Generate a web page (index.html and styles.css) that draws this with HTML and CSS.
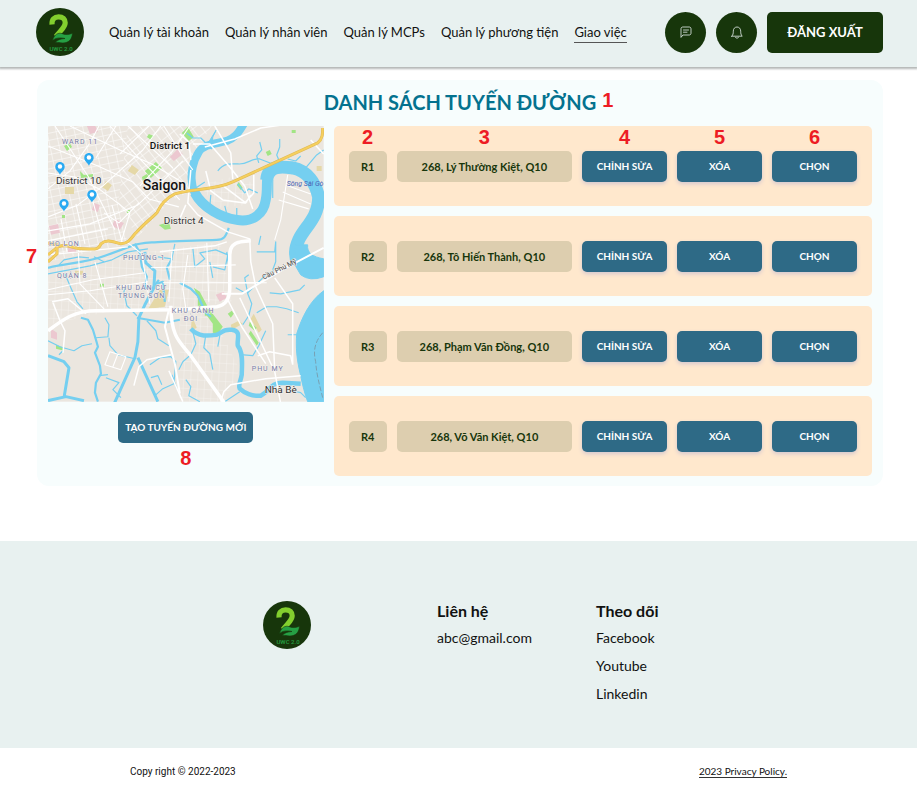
FILE: index.html
```html
<!DOCTYPE html>
<html lang="vi">
<head>
<meta charset="utf-8">
<meta name="viewport" content="width=device-width, initial-scale=1">
<title>UWC 2.0</title>
<link rel="stylesheet" href="styles.css">
</head>
<body>
<svg class="defs" aria-hidden="true">
  <symbol id="logo" viewBox="0 0 48 48">
    <circle cx="24" cy="24" r="24" fill="#17360b"/>
    <path d="M16 16.500C15.600 11.500 18.500 8.800 22.600 8.800c4.200 0 6.600 2.400 6.600 5.900 0 4.800-4.400 7.300-9.200 13.800" fill="none" stroke="#83cf2e" stroke-width="5.200"/>
    <path d="M16.500 32.500c1.500-5.500 5.400-8.500 9.800-6.800 3.500 1.400 6.500 1 10.200-.4-.6 7.600-5.500 10.600-12 9.400-2.100-.4-4-.4-5.500 0 2.600-3 5.300-3.700 10-4.200-5-1.100-9.300-.8-12.500 2z" fill="#26a044" stroke="#17360b" stroke-width=".6"/>
    <text x="25" y="43" text-anchor="middle" class="logo-text">UWC 2.0</text>
  </symbol>
  <symbol id="pin" viewBox="0 0 10 13">
    <path d="M5 0a4.700 4.700 0 0 1 4.700 4.700C9.700 8 6.500 9.500 5 12.700 3.500 9.500.3 8 .3 4.700A4.700 4.700 0 0 1 5 0z" fill="#2aaaf2"/>
    <circle cx="5" cy="4.600" r="2.200" fill="#fff"/>
  </symbol>
</svg>

<header class="header">
  <a class="brand" href="#"><svg class="logo" role="img" aria-label="UWC 2.0"><use href="#logo"/></svg></a>
  <nav class="nav">
    <a href="#">Quản lý tài khoản</a>
    <a href="#">Quản lý nhân viên</a>
    <a href="#">Quản lý MCPs</a>
    <a href="#">Quản lý phương tiện</a>
    <a href="#" class="active" aria-current="page">Giao việc</a>
  </nav>
  <div class="actions">
    <button class="round" type="button" aria-label="Tin nhắn">
      <svg width="12" height="12" viewBox="0 0 12 12"><path d="M1 11V2.800C1 1.700 1.700 1 2.800 1h6.400c1.100 0 1.800.7 1.800 1.800v4.400C11 8.300 10.300 9 9.200 9H3.300zM3.500 4h5M3.500 6.200h3.500"/></svg>
    </button>
    <button class="round" type="button" aria-label="Thông báo">
      <svg width="12" height="13" viewBox="0 0 12 13"><path d="M.8 10.200h10.400C9.900 8.700 9.700 7.500 9.700 5.200 9.700 2.700 8.200 1 6 1S2.300 2.700 2.300 5.200c0 2.300-.2 3.500-1.500 5zM4.500 11.500c.8.900 2.200.9 3 0"/></svg>
    </button>
    <button class="logout" type="button">ĐĂNG XUẤT</button>
  </div>
</header>

<main class="panel">
  <h1 class="title">DANH SÁCH TUYẾN ĐƯỜNG<span class="mark mark-title">1</span></h1>
  <div class="columns">
    <section class="map-col">
      <div class="map-box">
      <span class="mark mark-map">7</span>
      <svg class="map" viewBox="48 126 276 276" role="img" aria-label="Saigon">
        <defs>
          <pattern id="g1" width="8" height="10" patternUnits="userSpaceOnUse" patternTransform="rotate(-38)"><path d="M0 0H8M0 0V10" stroke="#fff" stroke-width="1.200"/></pattern>
          <pattern id="g2" width="9" height="7" patternUnits="userSpaceOnUse" patternTransform="rotate(-12)"><path d="M0 0H9M0 0V7" stroke="#fff" stroke-width="1"/></pattern>
          <pattern id="g3" width="7" height="9" patternUnits="userSpaceOnUse" patternTransform="rotate(3)"><path d="M0 0H7M0 0V9" stroke="#f8f6f2" stroke-width=".8"/></pattern>
        </defs>
        <rect x="48" y="126" width="276" height="276" fill="#ebe6df"/>
        <path d="M128 126h84l-17 25-3 40-22 10-32 36-20-30z" fill="url(#g1)"/>
        <path d="M48 126h80l-10 80 10 38-80 18z" fill="url(#g2)"/>
        <path d="M48 266l172-24 12 60-50 8-60-1-74 16zM200 185l40-10 15 10-8 20-30 3zM180 310l30 0 30 60-16 32h-45z" fill="url(#g3)"/>
        <g fill="#e5d8a7"><path d="M65 187h9v7h-9zM132 165l7 5-4 5-7-4zM106 181l6 4-4 6-6-4zM149 308l11-18h9l-4 17-22 3zM254 314l8 16-3 3-8-14zM231 325l8-4 4 3-11 6zM75 271l8 0v4h-8zM317 166h5v5h-5zM192 316l5 12-6 3z"/></g>
        <g fill="#ecc8d0"><path d="M170 157l8-8 5 5-9 7zM87 126l8-1 3 7-8 2zM49 226l9-2 2 9-9 2zM115 219l9 4-4 7-8-4zM216 295l8-3 3 6-7 4zM51 329l6 4v7l-6-2zM94 203l6 2-2 7-6-2zM68 247l8 2v4h-8z"/></g>
        <g fill="#a2e585"><path d="M145 171l11-9 6 6-11 10zM149 134l5 2-3 4-4-3zM142 177l5-3 2 3-6 4zM64 146l6-3 2 4-5 4zM80 171l4 4 9-1v3l-12 1zM182 133l6-6 6 10-5 4zM266 152l4-2 2 4-4 2zM159 225l10-3 2 7-6 1zM194 288l6 4 9 17 14 18-5 7-5-1 0-9-11-15zM198 299h5v8h-5zM251 331l8 12-2 3-8-12zM250 322l7 6-2 3-6-5zM56 345l8 3v3l-8-2zM239 182l4 6-2 2-4-5zM100 284h4v3h-4zM292 130h4v3h-4zM228 314l4-3 2 3-3 4zM205 311h5v5h-5zM62 215h3v3h-3zM127 210h3v3h-3z"/></g>
        <g class="water">
          <path class="w8" d="M244 124C238 134 235 138 227 141 215 144 204 144 199 152 193 161 191 174 192 181 193 196 203 206 214 212"/>
          <path class="w10" d="M195 193C203 208 222 218 237 220 254 223 264 213 266 200 269 186 264 175 273 168"/>
          <path class="w12" d="M267 180C268 164 285 167 293 168 308 171 316 184 319 197 319 218 305 227 299 240 295 249 295 255 298 264"/>
          <path d="M296 245h12c-1 8 5 12 16 14v18q-14 5-23-2l-7-12zM324 291c-14 10-22 27-27 43-1 14 0 26 4 42 2 10 4 18 7 26h16zM273 163l5-3v6zM217 129l-4 8-1 12-6-2z" fill="#75cff0"/>
          <path class="w3" d="M48 268C68 263 87 263 105 256L132 246C142 242 161 242 217 240 224 240 226 237 229 228"/>
          <path class="w2" d="M48 274l42-8 22-6 16-8 20-3M187 133l6 5 8 0 6 6M218 171c7-9 14-7 20-7 10 1 13-6 22-5l13 5M260 142l2 8-5 6 2 7M280 139v8l-3 8 3 7M299 165l-2 8 9-5 11-13 7-5"/>
          <path class="w2" d="M301 156l-5 5-8-2M238 184l7 9 4-4 9 4M211 195l-1 12M225 206l2 8M237 208v10M196 188l9-6M273 180v18"/>
          <path class="w3" d="M135 244l5 9 2 14 5 10-2 11 8 0 6-8"/>
          <path class="w4" d="M145 252l1 11 9 8-1 17-9 17-6 13-1 24-3 16-23 51M138 358l20 44"/>
          <path class="w2" d="M65 274l5 12 7 16 6 7"/>
          <path class="w3" d="M81 318l7 2 5 10 3 10 2 7-3 6 5 13 1 8-5 9-1 10 3 9"/>
          <path class="w2" d="M96 338l12-1 1-12-4-7M109 338l1 8 8 9 17 4M92 344l-10 2-8 5-14-4-12-6M63 351l-4 4M99 376l9-1M147 321l9 10 2 8 11 7"/>
          <path class="w4" d="M48 356l16 6 5 6-5 30M48 401l18-4 18 4"/>
          <path class="w2" d="M126 286l-2 6 3 14 10 10"/>
          <path class="w3" d="M137 318l28 5 15-3M180 283l11 6 7 7 8 17 5 4M157 284l6-2 2 20M172 259l-5 9 3 12"/>
          <path class="w6" d="M191 329c8 9 19 7 26 6 6-2 5-6 15-5 10 1 5 9 6 16 6 7 4 21 4 29-1 7-4 10-2 14 4 4 13 8 21 7 10-5 9-13 22-13l18 1"/>
          <path class="w2" d="M240 392l-15 10M241 355l12 1 6-10 7-15M243 325l6-9 3-12-4-10-3-16 4-3M236 288l9 5M248 293l18-18 8-4M270 293l11 1 19-4 5-5M257 313l10-6 10 0 10 2 12 4M288 335h10M291 391l10 2 5 5"/>
          <path class="w2" d="M193 332l3 12-5 11-8 7-4 8M206 335l-2 13 6 6 3 16M220 336l-2 11M186 380l5 7-2 9 11 6M172 375l5 14M150 365l10-7 11-1 5 5-2 22-11 5-8 7M151 378l7-2 4 9M106 378l13 5-6 7 8 8"/>
          <path class="w2" d="M193 248l2 19 10-8-5-6 16-3 12 5-3 15-12-3M213 278l-3-16M257 252h18l1-10 0 20-3 8M261 236l-2 9M227 252l2 14M59 265l5-5 15-3 10 1M94 257l10 5M158 257l14 2 3-15"/>
        </g>
        <g class="roads">
          <path class="r1" d="M48 146l50 20 35 16 16 17 30 8M55 126l33 50 27 54M48 189l22-18 20-28 9-17M48 217l30-12 25-19 40-36 18-24M70 126l50 24 32 14 30 18M48 173l27 4 24 12 20 15 11 9-9 30M48 231l42-7 48-19 20-19 25-25M96 158l20-32M76 204l9 40M110 126l26 29 44 45M128 126l45 42M120 154l29-28M140 186l32-34 18-26M48 241l60-12M61 219l6 33M92 198l12 44M112 205l11 40M164 126l18 29 11 15M104 213l15 10 20-20"/>
          <path class="r1" d="M128 243l14 11 8 50M48 290l45-10 52-7M48 255l80-8M95 262l13 45M78 244l2 40 25 26M172 252l-3 50M188 255l-5 34 3 20M207 243l2 59M48 295l42-4 58-9M163 283h104M151 268l85-3"/>
          <path class="r2" d="M191 170l-3 33 10 12 30 17 22 7 1 23 5 25 17 37 2 48 6 32M186 205l-7 16M191 160l-2-18-9-8M193 144h17l20 23 15 19 8 23M206 171l5 20 12 9 22 3 9-10v-18M205 147l30-8 26-11 63-9M215 126l16 27 2 26M222 185l24 18 5-8M230 283h30M160 252l55-6 12-4M311 140l13 14"/>
          <path class="r2" d="M134 386l5-19 8-7 24-5M183 402l-14-31M221 402l3-10 7-7 35-6 35-3M258 356l12-4 21 4 2 9M293 365v-61l-18-26M240 298l20 42 15 32M227 298l15 29 24 37M52 302l16-3 18 15M53 303l7 18 5 10-2 22"/>
          <path class="r4" d="M48 331c16-12 27-20 48-20l79-1 42-3c12-2 13-14 13-19v-33c0-8 4-12 11-13l10-1M171 306c0 32 10 37 20 50l30 42 4 6"/>
          <path class="r3" d="M222 294h20l20-12 24-14 38-20M169 310l-4 17 10 37 5 30"/>
          <path class="r1" d="M110 352l16 5-5 13-16-5zM118 354l-5 13M286 185l25 9M283 192l28 12M279 200l30 9M288 175l-7 45-6 20"/>
        </g>
        <path d="M48 262l9-8 0-9-9-2M48 255l10-8c10-4 14 2 25 2 11 0 15 2 18-5 6-5 12-2 20 0 10-1 11-8 16-12 8-9 14-13 20-19 4-8 8-14 18-19 18-6 39-3 58-12l37-17 48-22c5-4 5-9 5-15" fill="none" stroke="#dfb956" stroke-width="3"/>
        <path d="M48 262l9-8 0-9-9-2M48 255l10-8c10-4 14 2 25 2 11 0 15 2 18-5 6-5 12-2 20 0 10-1 11-8 16-12 8-9 14-13 20-19 4-8 8-14 18-19 18-6 39-3 58-12l37-17 48-22c5-4 5-9 5-15" fill="none" stroke="#f5cf5e" stroke-width="2"/>
        <path d="M323 333c-7 8-10 17-7 29 1 15 5 27 7 36" fill="none" stroke="#77a1b4" stroke-dasharray="5 2"/>
        <g class="area">
          <text x="62" y="144">WARD 11</text><text x="49" y="246">HO LON</text><text x="123" y="260">PHƯỜNG 1</text><text x="57" y="278">QUẬN 8</text>
          <text x="116" y="290">KHU DÂN CƯ</text><text x="118" y="298">TRUNG SƠN</text><text x="172" y="313">KHU CẢNH</text><text x="184" y="321">ĐỒI</text><text x="252" y="371">PHU MY</text>
        </g>
        <g class="place"><text x="56" y="184">District 10</text><text x="164" y="224">District 4</text><text x="265" y="393">Nhà Bè</text></g>
        <text class="place dark" x="150" y="149">District 1</text>
        <text class="city" x="143" y="190">Saigon</text>
        <text class="river" x="287" y="186">Sông Sài Gò</text>
        <text class="bridge" transform="translate(264 280) rotate(-27)">Cầu Phú Mỹ</text>
        <use href="#pin" x="55" y="162" width="10" height="13"/><use href="#pin" x="84" y="153" width="10" height="13"/>
        <use href="#pin" x="87" y="190" width="10" height="13"/><use href="#pin" x="59" y="199" width="10" height="13"/>
      </svg>
      </div>
      <button class="btn create" type="button">TẠO TUYẾN ĐƯỜNG MỚI</button>
      <span class="mark">8</span>
    </section>
    <ul class="routes">
      <li class="route">
        <span class="cell code">R1<span class="mark over">2</span></span>
        <span class="cell address">268, Lý Thường Kiệt, Q10<span class="mark over">3</span></span>
        <div class="slot"><button class="btn" type="button">CHỈNH SỬA</button><span class="mark over">4</span></div>
        <div class="slot"><button class="btn" type="button">XÓA</button><span class="mark over">5</span></div>
        <div class="slot"><button class="btn" type="button">CHỌN</button><span class="mark over">6</span></div>
      </li>
      <li class="route">
        <span class="cell code">R2</span>
        <span class="cell address">268, Tô Hiến Thành, Q10</span>
        <div class="slot"><button class="btn" type="button">CHỈNH SỬA</button></div>
        <div class="slot"><button class="btn" type="button">XÓA</button></div>
        <div class="slot"><button class="btn" type="button">CHỌN</button></div>
      </li>
      <li class="route">
        <span class="cell code">R3</span>
        <span class="cell address">268, Phạm Văn Đồng, Q10</span>
        <div class="slot"><button class="btn" type="button">CHỈNH SỬA</button></div>
        <div class="slot"><button class="btn" type="button">XÓA</button></div>
        <div class="slot"><button class="btn" type="button">CHỌN</button></div>
      </li>
      <li class="route">
        <span class="cell code">R4</span>
        <span class="cell address">268, Võ Văn Kiệt, Q10</span>
        <div class="slot"><button class="btn" type="button">CHỈNH SỬA</button></div>
        <div class="slot"><button class="btn" type="button">XÓA</button></div>
        <div class="slot"><button class="btn" type="button">CHỌN</button></div>
      </li>
    </ul>
  </div>
</main>

<footer>
  <div class="footer">
    <svg class="logo footer-logo" role="img" aria-label="UWC 2.0"><use href="#logo"/></svg>
    <section>
      <h2>Liên hệ</h2>
      <a href="#">abc@gmail.com</a>
    </section>
    <section>
      <h2>Theo dõi</h2>
      <a href="#">Facebook</a>
      <a href="#">Youtube</a>
      <a href="#">Linkedin</a>
    </section>
  </div>
  <div class="legal">
    <span>Copy right © 2022-2023</span>
    <a href="#">2023 Privacy Policy.</a>
  </div>
</footer>
</body>
</html>
```
FILE: styles.css
```css
* { box-sizing: border-box; }

body {
  margin: 0;
  background: #fff;
  color: #111;
  font-family: Lato, "Open Sans", sans-serif;
  font-size: 13px;
}

a { color: inherit; text-decoration: none; }
button { font: inherit; border: 0; padding: 0; cursor: pointer; }
h1, h2, ul { margin: 0; padding: 0; }
.defs { position: absolute; width: 0; height: 0; }

.header {
  display: flex;
  align-items: center;
  height: 67px;
  padding: 0 34px 3px 36px;
  background: #e8f1f0;
  box-shadow: 0 1px 2px 1px #b4b8b7;
}

.brand { display: flex; }
.logo { display: block; width: 48px; height: 48px; }
.logo-text { font: 500 6px Roboto, sans-serif; fill: #26a044; }

.nav { display: flex; gap: 16px; margin-left: 25px; white-space: nowrap; }
.nav a { line-height: 20px; border-bottom: 1px solid transparent; }
.nav .active { border-color: #555; }

.actions { display: flex; gap: 10px; margin-left: auto; }
.round {
  display: grid;
  place-items: center;
  width: 41px;
  height: 41px;
  border-radius: 50%;
  background: #17360b;
}
.round svg { fill: none; stroke: #e8f1f0; stroke-linejoin: round; stroke-linecap: round; stroke-width: .8; }
.logout {
  width: 116px;
  height: 41px;
  border-radius: 5px;
  background: #17360b;
  color: #fff;
  font-weight: 700;
}

.panel {
  margin: 13px 34px 55px 37px;
  padding: 10px 11px;
  border-radius: 12px;
  background: #f7fdfd;
}
.title {
  margin-bottom: 12px;
  color: #04728f;
  font-size: 20px;
  font-weight: 700;
  line-height: 24px;
  text-align: center;
}
.columns { display: grid; grid-template-columns: minmax(0, 276fr) minmax(0, 539fr); gap: 10px; }

.map-col { display: flex; flex-direction: column; align-items: center; }
.map-box { position: relative; width: 100%; margin-bottom: 10px; }
.map { display: block; width: 100%; aspect-ratio: 1; }
.water { fill: none; stroke: #75cff0; stroke-linejoin: round; }
.w2 { stroke-width: 1.2; }
.w3 { stroke-width: 2.2; }
.w4 { stroke-width: 3; }
.w6 { stroke-width: 4.5; }
.w8 { stroke-width: 8; }
.w10 { stroke-width: 10; }
.w12 { stroke-width: 13; }
.roads { fill: none; stroke: #fff; stroke-linejoin: round; }
.r1 { stroke-width: 1.1; }
.r2 { stroke-width: 1.5; }
.r3 { stroke-width: 2; }
.r4 { stroke-width: 3.5; }
.map text { font-family: Roboto, sans-serif; paint-order: stroke; stroke: #f5f2ee; stroke-width: 1; }
.area { font-size: 7px; letter-spacing: 1px; fill: #757ba6; }
.place { font-size: 10px; fill: #333; }
.map .dark { fill: #111; font-weight: 500; }
.city { font-size: 14px; font-weight: 500; fill: #111; }
.map .river { font-size: 7px; font-style: italic; fill: #4a62b5; stroke: none; }
.bridge { font-size: 7px; fill: #444; }

.btn {
  width: 100%;
  height: 31px;
  border-radius: 5px;
  background: #2e6a86;
  color: #fff;
  font-size: 10px;
  font-weight: 700;
}
.create { width: 135px; }

.mark {
  color: #ed1c24;
  font: 700 20px/31px "Liberation Sans", sans-serif;
}
.mark-title { position: absolute; margin: -5px 0 0 6px; }
.mark-map { position: absolute; right: 100%; top: 115px; margin-right: 11px; }
.over { position: absolute; left: 50%; bottom: 100%; transform: translateX(-50%); line-height: 27px; }

.routes { display: grid; gap: 10px; align-content: start; list-style: none; }
.route {
  display: flex;
  align-items: center;
  gap: 10px;
  height: 80px;
  padding: 0 15px;
  border-radius: 5px;
  background: #ffe8cd;
}
.cell {
  position: relative;
  border-radius: 5px;
  background: #ddceaf;
  color: #17360b;
  font-size: 11px;
  font-weight: 700;
  line-height: 31px;
  text-align: center;
}
.code { width: 38px; }
.address { flex: 1; }
.slot { position: relative; width: 85px; }
.slot .btn { box-shadow: 0 2px 4px #d5c8d0; }

.footer {
  display: grid;
  grid-template-columns: 263fr 174fr 159fr 321fr;
  min-height: 207px;
  padding-top: 60px;
  background: #e8f1f0;
}
.footer-logo { grid-column: 2; }
.footer h2 { font-size: 16px; font-weight: 700; line-height: 20px; margin-bottom: 3px; }
.footer a { display: block; font-size: 14px; line-height: 28px; }

.legal {
  display: flex;
  align-items: center;
  justify-content: space-between;
  height: 43px;
  padding: 3px 130px 0;
  font-size: 10px;
}
.legal span { font-family: Roboto, sans-serif; }
.legal a { border-bottom: 1px solid #333; }
```
